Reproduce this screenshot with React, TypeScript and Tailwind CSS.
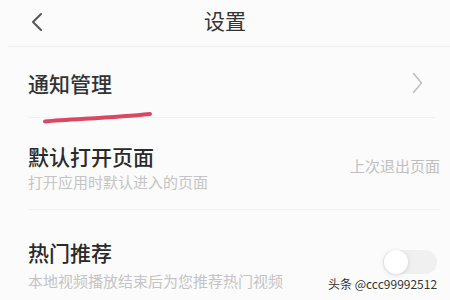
import React from 'react';

const font = { fontFamily: '"Noto Sans CJK SC", "Noto Sans", sans-serif' };

export default function App() {
  return (
    <div className="w-[450px] h-[300px] overflow-hidden bg-[#fbfbfb] text-[#2a2a2a] relative" style={font}>
      {/* Header */}
      <div className="h-[47px] ml-[8px] border-b border-[#efefef] flex items-center relative pb-[5px]">
        <svg className="absolute left-[22px] top-[12px]" width="14" height="20" viewBox="0 0 14 20">
          <path d="M11 2 L3 10 L11 18" fill="none" stroke="#555" strokeWidth="2" strokeLinecap="round" strokeLinejoin="round" />
        </svg>
        <div className="flex-1 text-center text-[21px] leading-none -ml-[8px] text-[#333]">设置</div>
      </div>

      {/* 通知管理 */}
      <div className="mx-[28px] mr-[15px] h-[71px] border-b border-[#f1f1f1] flex items-center justify-between pt-[2px] relative">
        <span className="text-[21px] leading-none font-medium text-[#333]">通知管理</span>
        <svg className="mr-[12px]" width="11" height="22" viewBox="0 0 11 22">
          <path d="M1.5 1.5 L9.5 11 L1.5 20.5" fill="none" stroke="#bdbdbd" strokeWidth="1.4" strokeLinecap="round" strokeLinejoin="round" />
        </svg>
        {/* hand drawn red mark */}
        <svg className="absolute left-[14px] top-[64px]" width="112" height="14" viewBox="0 0 112 14">
          <path d="M3 10.5 C 30 8, 70 7, 108 3" fill="none" stroke="#d84863" strokeWidth="4" strokeLinecap="round" />
        </svg>
      </div>

      {/* 默认打开页面 */}
      <div className="mx-[28px] mr-[10px] h-[92px] border-b border-[#f1f1f1] flex items-start justify-between pt-[28px]">
        <div className="flex flex-col">
          <span className="text-[21px] leading-none font-medium text-[#2a2a2a]">默认打开页面</span>
          <span className="text-[15px] leading-none mt-[7px] text-[#c4c4c4]">打开应用时默认进入的页面</span>
        </div>
        <span className="text-[15px] leading-none mt-[12px] text-[#bfbfbf]">上次退出页面</span>
      </div>

      {/* 热门推荐 */}
      <div className="mx-[28px] mr-[13px] flex items-start justify-between pt-[32px]">
        <div className="flex flex-col">
          <span className="text-[21px] leading-none font-medium text-[#2a2a2a]">热门推荐</span>
          <span className="text-[15px] leading-none mt-[10px] text-[#c4c4c4]">本地视频播放结束后为您推荐热门视频</span>
        </div>
        <div className="w-[54px] h-[24px] rounded-full bg-[#f0f0f0] mt-[8px] flex items-center pl-[1px]">
          <div className="w-[24px] h-[24px] rounded-full bg-white shadow-[0_1px_4px_rgba(0,0,0,0.15)]" />
        </div>
      </div>

      {/* watermark */}
      <div className="absolute left-[328px] top-[278px] text-[12px] leading-none text-[#333] [text-shadow:0_0_2px_#fff]" style={{ fontFamily: '"Noto Sans CJK SC", "Liberation Sans", sans-serif' }}>
        头条 @ccc99992512
      </div>
    </div>
  );
}
